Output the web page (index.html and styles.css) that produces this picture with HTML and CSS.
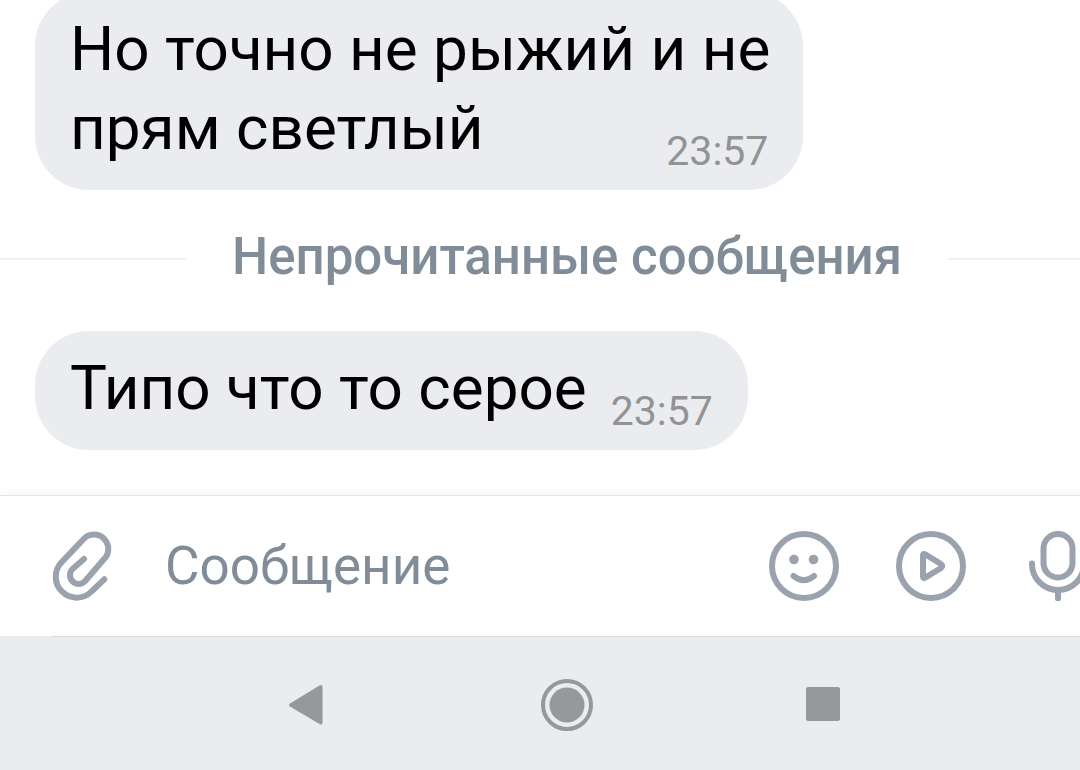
FILE: index.html
```html
<!DOCTYPE html>
<html lang="ru">
  <head>
    <meta charset="UTF-8" />
    <meta name="viewport" content="width=device-width, initial-scale=1.0" />
    <title>Сообщения</title>
    <link rel="stylesheet" href="styles.css">
  </head>
  <body>
    <div class="screen">
      <main class="chat">
        <div class="message">
          <p class="text">Но точно не рыжий и не<br>прям светлый</p>
          <time class="time pulled">23:57</time>
        </div>
        <div class="unread">Непрочитанные сообщения</div>
        <div class="message">
          <p class="text">Типо что то серое</p>
          <time class="time">23:57</time>
        </div>
      </main>

      <form class="composer">
        <button class="icon-button" type="button" aria-label="Прикрепить">
          <svg viewBox="0 0 70 70">
            <path d="M38 28 L26.500 38 A8 8 0 0 0 38.900 50.300 L58.100 28 A14 14 0 0 0 37.900 7.800 L15.900 30.900 A20 20 0 0 0 45.500 60.500 L58.300 48.300" />
          </svg>
        </button>
        <input class="field" type="text" placeholder="Сообщение" aria-label="Сообщение">
        <button class="icon-button" type="button" aria-label="Смайлы">
          <svg viewBox="0 0 70 70">
            <circle cx="35" cy="35" r="32" />
            <circle class="dot" cx="25" cy="28.500" r="4.800" />
            <circle class="dot" cx="44.500" cy="28.500" r="4.800" />
            <path d="M24.500 45 Q34.800 53.500 45 45" />
          </svg>
        </button>
        <button class="icon-button" type="button" aria-label="Видеосообщение">
          <svg viewBox="0 0 70 70">
            <circle cx="35" cy="35" r="32" />
            <path d="M27 24.500 Q27 22 29.500 23.500 L45 33 Q47.500 35 45 37 L29.500 46.500 Q27 48 27 45.500 Z" />
          </svg>
        </button>
        <button class="icon-button" type="button" aria-label="Голосовое сообщение">
          <svg viewBox="0 0 70 70">
            <rect x="20.500" y="3" width="29" height="43.500" rx="14.500" />
            <path d="M9 32.500 V33 A26 26 0 0 0 61 33 V32.500 M35 59.500 V67.500" />
          </svg>
        </button>
      </form>

      <nav class="navbar">
        <hr class="rule">
        <div class="keys">
          <button class="key" type="button" aria-label="Назад">
            <svg viewBox="0 0 56 56"><path d="M9 26.500 L38.500 8.500 Q41.500 7 41.500 10 V45.500 Q41.500 48.500 38.500 47 L9 29.500 Q7 28 9 26.500 Z" /></svg>
          </button>
          <button class="key" type="button" aria-label="Домой">
            <svg viewBox="0 0 56 56">
              <circle class="ring" cx="28" cy="28" r="24" />
              <circle cx="28" cy="28" r="17.500" />
            </svg>
          </button>
          <button class="key" type="button" aria-label="Недавние">
            <svg viewBox="0 0 56 56"><rect x="9" y="10" width="34" height="34" rx="2" /></svg>
          </button>
        </div>
      </nav>
    </div>
  </body>
</html>
```

FILE: styles.css
```css
* {
  box-sizing: border-box;
}

body {
  margin: 0;
  overflow: hidden;
  background: #fff;
  font-family: Roboto, "Noto Sans", sans-serif;
}

/* a little wider than the window, so the right edge is cut off */
.screen {
  display: flex;
  flex-direction: column;
  width: 105vw;
  height: 100vh;
}

.chat {
  flex: 1;
  display: flex;
  flex-direction: column;
  justify-content: flex-end;
  align-items: flex-start;
  min-height: 0;
  padding-bottom: 45px;
}

.message {
  display: flex;
  align-items: flex-end;
  gap: 24px;
  flex-shrink: 0;
  margin-left: 35px;
  padding: 17px 35px 15px;
  border-radius: 54px;
  background: #ebecf0;
}

.text {
  margin: 0;
  padding-bottom: 8px;
  font-size: 62px;
  line-height: 79px;
  color: #000;
}

.time {
  font-size: 41px;
  line-height: 48px;
  color: #919396;
}

/* sits in the free end of the last line */
.pulled {
  margin-left: -128px;
}

.unread {
  display: flex;
  align-items: center;
  gap: 46px;
  align-self: stretch;
  flex-shrink: 0;
  padding: 37px 0 44px;
  font-size: 51px;
  font-weight: 500;
  line-height: 60px;
  color: #818c99;
}

.unread::before,
.unread::after {
  content: "";
  flex: 1;
  height: 2px;
  margin-top: 4px;
  background: #f0f0f2;
}

.composer {
  display: flex;
  align-items: center;
  gap: 57px;
  height: 141px;
  padding: 0 41px 0 46px;
  border-top: 1px solid #e1e3e6;
  background: #fff;
  box-shadow: 0 -2px 8px rgba(0, 0, 0, 0.04);
}

.icon-button,
.key {
  flex: none;
  padding: 0;
  border: none;
  background: none;
  cursor: pointer;
}

.icon-button svg {
  display: block;
  width: 70px;
  height: 70px;
  fill: none;
  stroke: #99a2ad;
  stroke-width: 6;
  stroke-linecap: round;
  stroke-linejoin: round;
}

.icon-button .dot {
  fill: #99a2ad;
  stroke: none;
}

.field {
  flex: 1;
  min-width: 0;
  margin-left: -8px;
  padding: 0;
  border: none;
  outline: none;
  background: none;
  font-family: inherit;
  font-size: 53px;
  line-height: 64px;
  color: #000;
}

.field::placeholder {
  color: #818c99;
  opacity: 1;
}

.navbar {
  height: 134px;
  background: #ebecf0;
}

.rule {
  height: 1px;
  margin: 0 0 0 52px;
  border: none;
  background: #d3d6da;
}

.keys {
  display: grid;
  grid-template-columns: repeat(3, 1fr);
  justify-items: center;
  padding: 40px 180px;
}

.key svg {
  display: block;
  width: 56px;
  height: 56px;
  fill: #97989a;
}

.key .ring {
  fill: none;
  stroke: #97989a;
  stroke-width: 4;
}
```
